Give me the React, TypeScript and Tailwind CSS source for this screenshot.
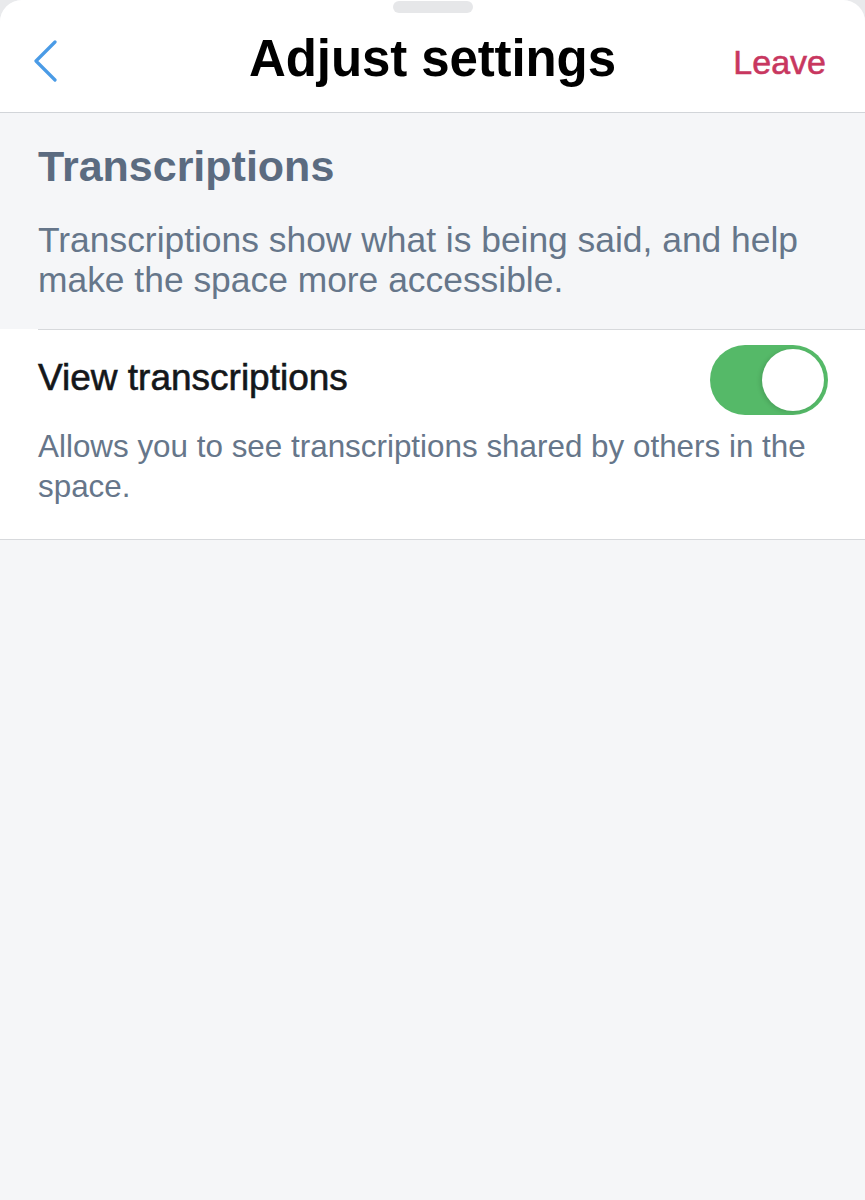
import { useState } from 'react';

function Toggle({ on, onChange }: { on: boolean; onChange: () => void }) {
  return (
    <button
      onClick={onChange}
      className={`relative h-[70px] w-[118px] shrink-0 rounded-full transition-colors ${
        on ? 'bg-[#55b968]' : 'bg-[#e3e5e8]'
      }`}
    >
      <span
        className={`absolute top-[4px] h-[62px] w-[62px] rounded-full bg-white shadow-[-2px_1px_4px_rgba(0,0,0,0.12)] transition-all ${
          on ? 'left-[52px]' : 'left-[4px]'
        }`}
      />
    </button>
  );
}

export default function App() {
  const [viewOn, setViewOn] = useState(true);

  return (
    <div className="min-h-screen bg-[#e9eaec] font-['Liberation_Sans',Arial,sans-serif]">
      <div className="min-h-screen overflow-hidden rounded-t-[22px] bg-[#f5f6f8]">
        {/* Header */}
        <header className="relative flex h-[113px] items-center justify-between border-b border-[#d2d5d9] bg-white pl-[33px] pr-[39px]">
          <span className="absolute left-1/2 top-[1px] h-[12px] w-[80px] -translate-x-1/2 rounded-full bg-[#e6e7e9]" />
          <button className="mt-[10px] flex h-[44px] w-[30px] items-center">
            <svg width="26" height="42" viewBox="0 0 26 42" fill="none">
              <path d="M22 2 L3 21 L22 40" stroke="#4a9be6" strokeWidth="3.2" strokeLinecap="round" strokeLinejoin="round" />
            </svg>
          </button>
          <h1 className="absolute left-1/2 top-[31px] -translate-x-1/2 text-[51px] font-bold leading-[56px] tracking-[-0.1px] text-black">
            Adjust settings
          </h1>
          <button className="mt-[12px] text-[34px] leading-[40px] text-[#c8375f] [-webkit-text-stroke:0.6px_#c8375f]">
            Leave
          </button>
        </header>

        {/* Transcriptions info */}
        <section className="px-[38px] pb-[29px] pt-[27px]">
          <h2 className="text-[43px] font-bold leading-[52px] text-[#5b6b80]">Transcriptions</h2>
          <p className="mt-[28px] text-[35.4px] leading-[40px] text-[#66768a]">
            Transcriptions show what is being said, and help make the space more accessible.
          </p>
        </section>

        {/* Setting row */}
        <section className="border-b border-[#d7d9dc] bg-white">
          <div className="ml-[38px] border-t border-[#d7d9dc] pb-[32px] pr-[37px] pt-[15px]">
            <div className="flex items-start justify-between">
              <span className="mt-[11px] text-[37px] leading-[44px] text-[#14171a] [-webkit-text-stroke:0.6px_#14171a]">
                View transcriptions
              </span>
              <Toggle on={viewOn} onChange={() => setViewOn(!viewOn)} />
            </div>
            <p className="mt-[12px] text-[31.4px] leading-[40px] text-[#66768a]">
              Allows you to see transcriptions shared by others in the space.
            </p>
          </div>
        </section>
      </div>
    </div>
  );
}
